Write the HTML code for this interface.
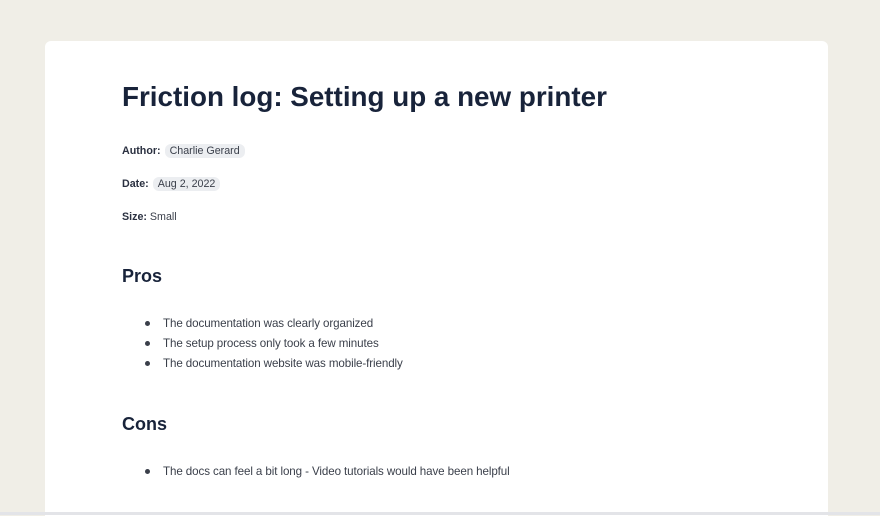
<!DOCTYPE html>
<html><head><style>
body{margin:0;width:880px;height:515px;background:#f0eee7;font-family:"Liberation Sans",sans-serif;overflow:hidden;position:relative;color:#1a2238}
.card{position:absolute;left:45px;top:41px;width:783px;height:475px;background:#fff;border-radius:6px 6px 0 0}
.bot{position:absolute;left:0;top:512px;width:880px;height:3px;background:#e3e4e8}
h1{position:absolute;left:122px;top:81px;margin:0;font-size:27.8px;font-weight:bold;color:#18233a}
h2{position:absolute;left:122px;margin:0;font-size:18px;font-weight:bold;color:#18233a}
.m{position:absolute;left:122px;font-size:10.7px;color:#3a3f4a}
.m b{color:#2a3040}
.p{background:#eceef1;border-radius:6px;padding:1px 5px;margin-left:1px}
.li{position:absolute;left:163px;font-size:11.6px;color:#3a3f4a;letter-spacing:-0.1px}
.li:before{content:"";position:absolute;left:-18px;top:4px;width:5px;height:5px;border-radius:50%;background:#3a3f4a}
</style></head><body>
<div class="card"></div><div class="bot"></div>
<h1>Friction log: Setting up a new printer</h1>
<div class="m" style="top:145px"><b>Author:</b> <span class="p">Charlie Gerard</span></div>
<div class="m" style="top:178px"><b>Date:</b> <span class="p">Aug 2, 2022</span></div>
<div class="m" style="top:211px"><b>Size:</b> Small</div>
<h2 style="top:266px">Pros</h2>
<div class="li" style="top:317px">The documentation was clearly organized</div>
<div class="li" style="top:337px">The setup process only took a few minutes</div>
<div class="li" style="top:357px">The documentation website was mobile-friendly</div>
<h2 style="top:414px">Cons</h2>
<div class="li" style="top:465px">The docs can feel a bit long - Video tutorials would have been helpful</div>
</body></html>
